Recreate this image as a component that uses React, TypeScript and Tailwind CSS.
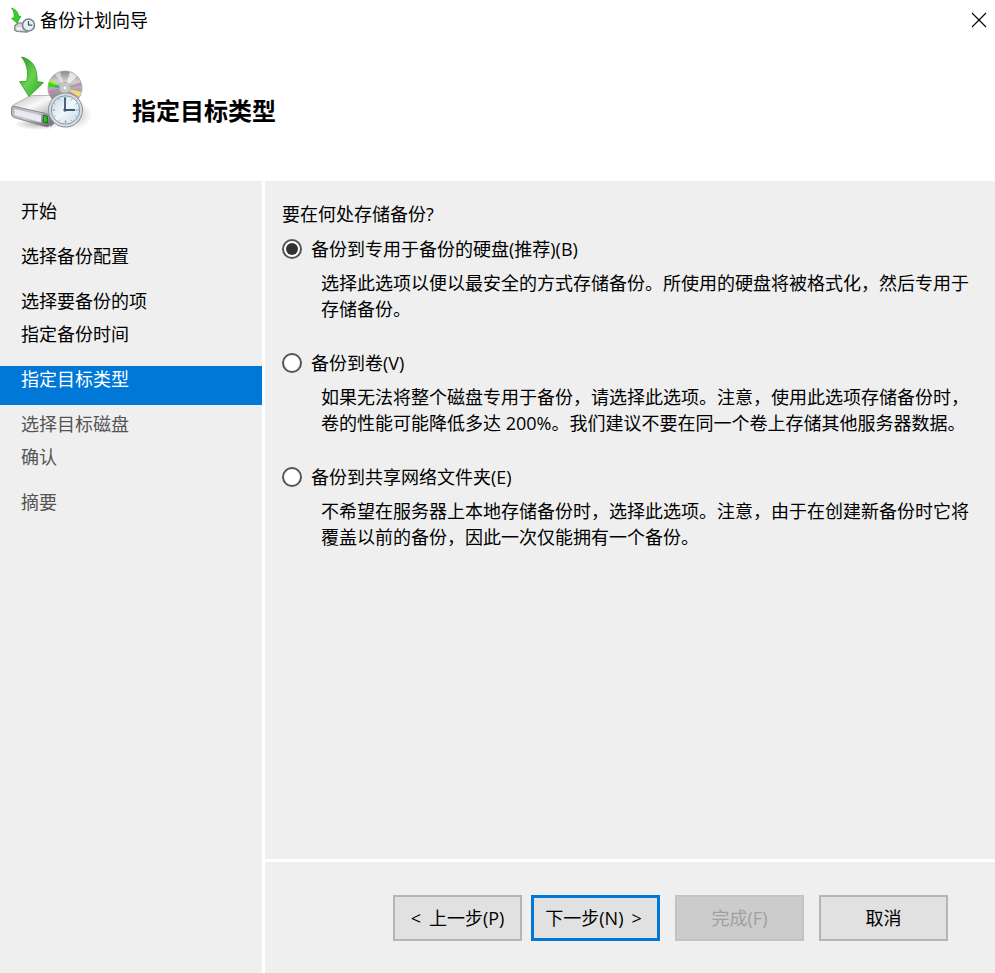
import { useState } from "react";

type Step = { label: string; state: "done" | "current" | "pending"; tight?: boolean };

const steps: Step[] = [
  { label: "开始", state: "done" },
  { label: "选择备份配置", state: "done" },
  { label: "选择要备份的项", state: "done", tight: true },
  { label: "指定备份时间", state: "done" },
  { label: "指定目标类型", state: "current" },
  { label: "选择目标磁盘", state: "pending", tight: true },
  { label: "确认", state: "pending" },
  { label: "摘要", state: "pending" },
];

const stepStyles = {
  done: "text-black",
  current: "bg-[#0078d7] text-white",
  pending: "text-[#555555]",
};

const options = [
  {
    id: "disk",
    label: "备份到专用于备份的硬盘(推荐)(B)",
    text: "选择此选项以便以最安全的方式存储备份。所使用的硬盘将被格式化，然后专用于存储备份。",
  },
  {
    id: "volume",
    label: "备份到卷(V)",
    text: "如果无法将整个磁盘专用于备份，请选择此选项。注意，使用此选项存储备份时，卷的性能可能降低多达 200%。我们建议不要在同一个卷上存储其他服务器数据。",
  },
  {
    id: "share",
    label: "备份到共享网络文件夹(E)",
    text: "不希望在服务器上本地存储备份时，选择此选项。注意，由于在创建新备份时它将覆盖以前的备份，因此一次仅能拥有一个备份。",
  },
];

function SmallIcon() {
  return (
    <svg className="size-7 shrink-0" viewBox="8 6 28 28" aria-hidden="true">
      <path d="M15 25.500l3-2.500h9v9l-10-.5-2.500-1.500z" fill="#d2d2d4" stroke="#77777b" strokeWidth="1.200" />
      <path d="M16.500 27h6v3h-6z" fill="#ececee" />
      <path d="M11.500 8c4.500 1.500 7 4.500 7 8.500l2.500-.5-4 7-5.500-4.500 2.500-.5c.6-3.500 0-7-2.500-10z" fill="#35d321" stroke="#239a17" strokeWidth=".7" />
      <circle cx="28.500" cy="25" r="6" fill="#e9f0f4" stroke="#78828a" strokeWidth="1.600" />
      <path d="M28.500 21v4.200h3.800" fill="none" stroke="#3d5a70" strokeWidth="1.200" />
    </svg>
  );
}

function BackupIcon() {
  return (
    <svg className="h-20 w-[84px] shrink-0" viewBox="8 54 84 80" aria-hidden="true">
      <defs>
        <linearGradient id="arrow" x1="0" y1="0" x2="1" y2="1">
          <stop offset="0" stopColor="#239b25" />
          <stop offset=".5" stopColor="#6bd04f" />
          <stop offset="1" stopColor="#22a526" />
        </linearGradient>
        <linearGradient id="driveTop" x1="0" y1="0" x2="1" y2="1">
          <stop offset="0" stopColor="#b8b8b8" />
          <stop offset=".5" stopColor="#fafafa" />
          <stop offset="1" stopColor="#a8a8a8" />
        </linearGradient>
        <linearGradient id="driveFront" x1="0" y1="0" x2="1" y2="1">
          <stop offset="0" stopColor="#b2b2b8" />
          <stop offset=".5" stopColor="#c4c4cc" />
          <stop offset="1" stopColor="#66666c" />
        </linearGradient>
        <linearGradient id="disc" x1="0" y1="0" x2="0" y2="1">
          <stop offset="0" stopColor="#8a8a8a" />
          <stop offset=".3" stopColor="#cfcfcf" />
          <stop offset=".6" stopColor="#a0a0a0" />
          <stop offset="1" stopColor="#777777" />
        </linearGradient>
        <linearGradient id="face" x1="0" y1="0" x2="1" y2="1">
          <stop offset="0" stopColor="#c3d8e6" />
          <stop offset=".5" stopColor="#f1f7fa" />
          <stop offset="1" stopColor="#c5d7e2" />
        </linearGradient>
        <radialGradient id="shade">
          <stop offset="0" stopColor="#999999" stopOpacity=".7" />
          <stop offset="1" stopColor="#999999" stopOpacity="0" />
        </radialGradient>
      </defs>
      <ellipse cx="72" cy="115" rx="20" ry="15" fill="url(#shade)" />
      <ellipse cx="38" cy="124" rx="24" ry="6" fill="url(#shade)" />
      <path d="M49 99H56V122L50 127Z" fill="#77777c" />
      <path d="M12 107Q12 105.500 14 104.500L29 96.500Q31 95.500 34 95.500H54V110L48 116Z" fill="url(#driveTop)" stroke="#a2a2a6" strokeWidth=".7" />
      <path d="M11.500 107.500Q12 105.500 15 106.500L46 113.500Q49 114.500 49.500 117V124Q49.500 127.500 45.500 126.500L14 117.500Q11.500 116.500 11.500 114Z" fill="url(#driveFront)" stroke="#77777d" strokeWidth=".8" />
      <path d="M14.500 109L41 115.500V122.500L14.500 115Z" fill="#e9e9f3" />
      <path d="M43.300 115l4 1v7l-4-1z" fill="#23c51e" stroke="#1f5a19" strokeWidth=".9" />
      <circle cx="65" cy="88" r="17" fill="url(#disc)" stroke="#a0a0a0" strokeWidth=".8" />
      <path d="M65 88L55 74.500A17 17 0 0 1 60 71.900Z" fill="#f0f0f0" opacity=".6" />
      <path d="M65 88L70 72A17 17 0 0 1 77 76.200Z" fill="#f4f4f4" opacity=".8" />
      <path d="M65 88L49 82L48.200 87Z" fill="#39dc16" />
      <path d="M65 88L50.500 80L49 82Z" fill="#b5e62f" />
      <path d="M65 88L56 84.800L54.500 87.200Z" fill="#18a5e1" />
      <path d="M65 88L48.300 91L50 95Z" fill="#c982ad" />
      <path d="M65 88L80.800 82.500L81.500 85.500Z" fill="#cf86b0" />
      <path d="M65 88L81.500 92L79 97Z" fill="#f1df73" />
      <path d="M65 88L79 97L76 100Z" fill="#ed8fc1" />
      <circle cx="65" cy="88" r="5.500" fill="#cccccc" stroke="#a4a4a4" strokeWidth=".8" />
      <circle cx="65" cy="88" r="2.300" fill="#f9f9f9" stroke="#999999" strokeWidth=".7" />
      <circle cx="65.500" cy="110" r="17.500" fill="#8b949b" />
      <circle cx="65.500" cy="110" r="16.500" fill="#d6dcdf" />
      <circle cx="65.500" cy="110" r="14.200" fill="url(#face)" stroke="#8198a8" strokeWidth="1" />
      <g stroke="#8497a4" strokeWidth="1.200">
        <path d="M65.500 97v2.500M65.500 120.500v2.500M52.500 110h2.500M76 110h2.500" />
        <path d="M59 98.800l.8 1.400M72 98.800l-.8 1.400M54.300 103.500l1.400.8M76.700 103.500l-1.400.8M54.300 116.500l1.400-.8M76.700 116.500l-1.400-.8M59 121.200l.8-1.400M72 121.200l-.8-1.400" strokeWidth=".8" />
      </g>
      <path d="M65 97.500V110H75" fill="none" stroke="#3c5a70" strokeWidth="1.800" />
      <circle cx="65" cy="110" r="1.700" fill="#3c5a70" />
      <path d="M21.500 57C32 59 38 68 37 81.500L43.500 82.500L29 96.500L19.500 81.500L26.500 81.500C29 73 27 64 21.500 57Z" fill="url(#arrow)" stroke="#279f29" strokeWidth=".8" />
    </svg>
  );
}

const buttonBase = "flex h-[46px] w-[129px] items-center justify-center gap-2";

export default function App() {
  const [target, setTarget] = useState("disk");

  return (
    <div
      lang="zh-CN"
      className="flex min-h-screen flex-col bg-white font-['Open_Sans','Noto_Sans_CJK_SC',sans-serif] text-[18px] leading-[26px] text-black"
    >
      <header className="flex h-[181px] flex-col">
        <div className="flex h-10 items-center px-2">
          <SmallIcon />
          <span className="ml-1 grow">备份计划向导</span>
          <button type="button" aria-label="关闭" className="flex size-4 items-center justify-center">
            <svg className="size-4" viewBox="0 0 16 16" aria-hidden="true">
              <path d="M1 1l14 14M15 1L1 15" stroke="#000000" strokeWidth="1.100" />
            </svg>
          </button>
        </div>
        <div className="flex gap-10 pt-3.5 pl-2">
          <BackupIcon />
          <h1 className="pt-[41px] text-[24px] leading-8 font-bold">指定目标类型</h1>
        </div>
      </header>

      <div className="flex grow gap-[3px]">
        <nav className="w-[262px] shrink-0 bg-[#efefef] pt-[17px]">
          <ol className="flex flex-col gap-1.5">
            {steps.map((s) => (
              <li
                key={s.label}
                aria-current={s.state === "current" ? "step" : undefined}
                className={`pl-[21px] ${s.tight ? "pb-px" : "pb-[13px]"} ${stepStyles[s.state]}`}
              >
                {s.label}
              </li>
            ))}
          </ol>
        </nav>

        <div className="flex grow flex-col gap-[3px]">
          <main className="grow bg-[#efefef] pt-5 pr-5 pl-[17px]">
            <fieldset>
              <legend className="mb-[9px]">要在何处存储备份?</legend>
              <div className="flex flex-col gap-7">
                {options.map((o) => (
                  <div key={o.id}>
                    <label className="flex items-center gap-[9px]">
                      <input
                        type="radio"
                        name="target"
                        aria-describedby={`${o.id}-text`}
                        checked={target === o.id}
                        onChange={() => setTarget(o.id)}
                        className="grid size-5 shrink-0 appearance-none place-content-center rounded-full border-2 border-[#555555] bg-white before:size-3 before:rounded-full checked:before:bg-[#333333]"
                      />
                      {o.label}
                    </label>
                    <p id={`${o.id}-text`} className="mt-2 pl-[39px]">
                      {o.text}
                    </p>
                  </div>
                ))}
              </div>
            </fieldset>
          </main>

          <footer className="flex h-[111px] items-start justify-end gap-[15px] bg-[#efefef] pt-[33px] pr-[47px]">
            <div className="flex gap-[9px]">
              <button type="button" className={`${buttonBase} border-2 border-[#b5b5b5] bg-[#e1e1e1]`}>
                <span>&lt;</span>
                <span>上一步(P)</span>
              </button>
              <button type="button" className={`${buttonBase} border-3 border-[#0078d7] bg-[#e1e1e1] pr-1`}>
                <span>下一步(N)</span>
                <span>&gt;</span>
              </button>
            </div>
            <button
              type="button"
              disabled
              className={`${buttonBase} border-2 border-[#c3c3c3] bg-[#cccccc] text-[#a0a0a0]`}
            >
              完成(F)
            </button>
            <button type="button" className={`${buttonBase} border-2 border-[#b5b5b5] bg-[#e1e1e1]`}>
              取消
            </button>
          </footer>
        </div>
      </div>
    </div>
  );
}
